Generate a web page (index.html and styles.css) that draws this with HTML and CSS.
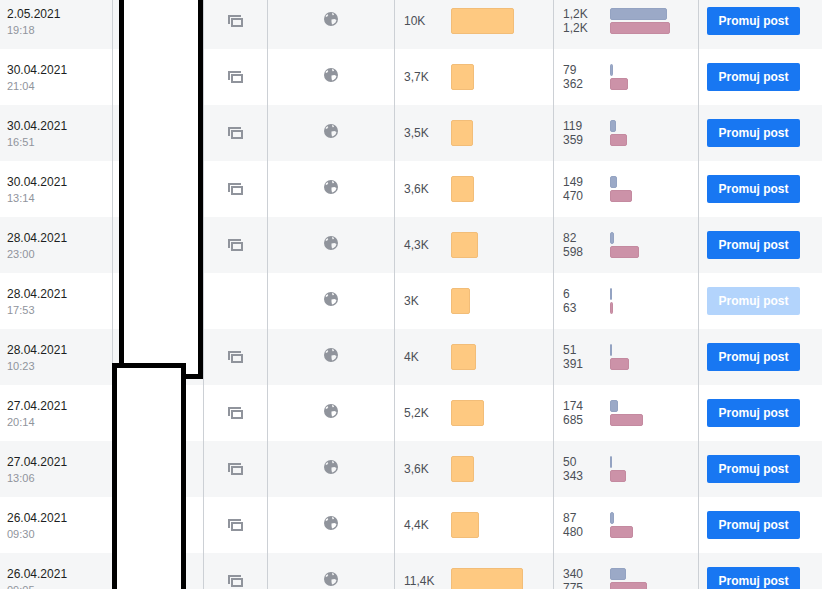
FILE: index.html
```html
<!DOCTYPE html>
<html lang="en">
<head>
    <meta charset="UTF-8">
    <title>Posty</title>
    <link rel="stylesheet" href="styles.css">
</head>
<body>
    <svg class="defs" width="0" height="0">
        <symbol id="copyIcon" viewBox="0 0 15 12">
            <path fill="#90949c" fill-rule="evenodd" d="M0 0h13v2H2v7H0zM3 3h12v9H3zM5 5v5h8V5z"/>
        </symbol>
        <symbol id="globeIcon" viewBox="0 0 14 14">
            <path fill="#90949c" fill-rule="evenodd" d="M7 0a7 7 0 1 0 0 14A7 7 0 0 0 7 0zM7.500 7.500l3-.5 2 1-1 2.500-2 1.500-1.500.5-.5-2.500zM1.800 3.500 3.500 2.200l.8.8-1 1.500-1.500.5zM8 1l1.500.5.5 1.500-1.500.3z"/>
        </symbol>
    </svg>

    <div class="table">
        <div class="row">
            <div class="cell dateCell"><span class="date">2.05.2021</span><span class="time">19:18</span></div>
            <div class="cell"></div>
            <div class="cell iconCell"><svg class="copyIcon"><use href="#copyIcon"/></svg></div>
            <div class="cell iconCell"><svg class="globeIcon"><use href="#globeIcon"/></svg></div>
            <div class="cell reachCell"><span class="metric">10K</span><div class="bar" style="width:63px"></div></div>
            <div class="cell clicksCell"><div class="clicksRow"><span class="clickNum">1,2K</span><div class="miniBar blue" style="width:57px"></div></div><div class="clicksRow"><span class="clickNum">1,2K</span><div class="miniBar red" style="width:60px"></div></div></div>
            <div class="cell btnCell"><button class="promoBtn">Promuj post</button></div>
        </div>
        <div class="row">
            <div class="cell dateCell"><span class="date">30.04.2021</span><span class="time">21:04</span></div>
            <div class="cell"></div>
            <div class="cell iconCell"><svg class="copyIcon"><use href="#copyIcon"/></svg></div>
            <div class="cell iconCell"><svg class="globeIcon"><use href="#globeIcon"/></svg></div>
            <div class="cell reachCell"><span class="metric">3,7K</span><div class="bar" style="width:23px"></div></div>
            <div class="cell clicksCell"><div class="clicksRow"><span class="clickNum">79</span><div class="miniBar blue" style="width:3px"></div></div><div class="clicksRow"><span class="clickNum">362</span><div class="miniBar red" style="width:18px"></div></div></div>
            <div class="cell btnCell"><button class="promoBtn">Promuj post</button></div>
        </div>
        <div class="row">
            <div class="cell dateCell"><span class="date">30.04.2021</span><span class="time">16:51</span></div>
            <div class="cell"></div>
            <div class="cell iconCell"><svg class="copyIcon"><use href="#copyIcon"/></svg></div>
            <div class="cell iconCell"><svg class="globeIcon"><use href="#globeIcon"/></svg></div>
            <div class="cell reachCell"><span class="metric">3,5K</span><div class="bar" style="width:22px"></div></div>
            <div class="cell clicksCell"><div class="clicksRow"><span class="clickNum">119</span><div class="miniBar blue" style="width:6px"></div></div><div class="clicksRow"><span class="clickNum">359</span><div class="miniBar red" style="width:17px"></div></div></div>
            <div class="cell btnCell"><button class="promoBtn">Promuj post</button></div>
        </div>
        <div class="row">
            <div class="cell dateCell"><span class="date">30.04.2021</span><span class="time">13:14</span></div>
            <div class="cell"></div>
            <div class="cell iconCell"><svg class="copyIcon"><use href="#copyIcon"/></svg></div>
            <div class="cell iconCell"><svg class="globeIcon"><use href="#globeIcon"/></svg></div>
            <div class="cell reachCell"><span class="metric">3,6K</span><div class="bar" style="width:23px"></div></div>
            <div class="cell clicksCell"><div class="clicksRow"><span class="clickNum">149</span><div class="miniBar blue" style="width:7px"></div></div><div class="clicksRow"><span class="clickNum">470</span><div class="miniBar red" style="width:22px"></div></div></div>
            <div class="cell btnCell"><button class="promoBtn">Promuj post</button></div>
        </div>
        <div class="row">
            <div class="cell dateCell"><span class="date">28.04.2021</span><span class="time">23:00</span></div>
            <div class="cell"></div>
            <div class="cell iconCell"><svg class="copyIcon"><use href="#copyIcon"/></svg></div>
            <div class="cell iconCell"><svg class="globeIcon"><use href="#globeIcon"/></svg></div>
            <div class="cell reachCell"><span class="metric">4,3K</span><div class="bar" style="width:27px"></div></div>
            <div class="cell clicksCell"><div class="clicksRow"><span class="clickNum">82</span><div class="miniBar blue" style="width:4px"></div></div><div class="clicksRow"><span class="clickNum">598</span><div class="miniBar red" style="width:29px"></div></div></div>
            <div class="cell btnCell"><button class="promoBtn">Promuj post</button></div>
        </div>
        <div class="row">
            <div class="cell dateCell"><span class="date">28.04.2021</span><span class="time">17:53</span></div>
            <div class="cell"></div>
            <div class="cell iconCell"></div>
            <div class="cell iconCell"><svg class="globeIcon"><use href="#globeIcon"/></svg></div>
            <div class="cell reachCell"><span class="metric">3K</span><div class="bar" style="width:19px"></div></div>
            <div class="cell clicksCell"><div class="clicksRow"><span class="clickNum">6</span><div class="miniBar blue" style="width:1px"></div></div><div class="clicksRow"><span class="clickNum">63</span><div class="miniBar red" style="width:3px"></div></div></div>
            <div class="cell btnCell"><button class="promoBtn disabled">Promuj post</button></div>
        </div>
        <div class="row">
            <div class="cell dateCell"><span class="date">28.04.2021</span><span class="time">10:23</span></div>
            <div class="cell"></div>
            <div class="cell iconCell"><svg class="copyIcon"><use href="#copyIcon"/></svg></div>
            <div class="cell iconCell"><svg class="globeIcon"><use href="#globeIcon"/></svg></div>
            <div class="cell reachCell"><span class="metric">4K</span><div class="bar" style="width:25px"></div></div>
            <div class="cell clicksCell"><div class="clicksRow"><span class="clickNum">51</span><div class="miniBar blue" style="width:2px"></div></div><div class="clicksRow"><span class="clickNum">391</span><div class="miniBar red" style="width:19px"></div></div></div>
            <div class="cell btnCell"><button class="promoBtn">Promuj post</button></div>
        </div>
        <div class="row">
            <div class="cell dateCell"><span class="date">27.04.2021</span><span class="time">20:14</span></div>
            <div class="cell"></div>
            <div class="cell iconCell"><svg class="copyIcon"><use href="#copyIcon"/></svg></div>
            <div class="cell iconCell"><svg class="globeIcon"><use href="#globeIcon"/></svg></div>
            <div class="cell reachCell"><span class="metric">5,2K</span><div class="bar" style="width:33px"></div></div>
            <div class="cell clicksCell"><div class="clicksRow"><span class="clickNum">174</span><div class="miniBar blue" style="width:8px"></div></div><div class="clicksRow"><span class="clickNum">685</span><div class="miniBar red" style="width:33px"></div></div></div>
            <div class="cell btnCell"><button class="promoBtn">Promuj post</button></div>
        </div>
        <div class="row">
            <div class="cell dateCell"><span class="date">27.04.2021</span><span class="time">13:06</span></div>
            <div class="cell"></div>
            <div class="cell iconCell"><svg class="copyIcon"><use href="#copyIcon"/></svg></div>
            <div class="cell iconCell"><svg class="globeIcon"><use href="#globeIcon"/></svg></div>
            <div class="cell reachCell"><span class="metric">3,6K</span><div class="bar" style="width:23px"></div></div>
            <div class="cell clicksCell"><div class="clicksRow"><span class="clickNum">50</span><div class="miniBar blue" style="width:2px"></div></div><div class="clicksRow"><span class="clickNum">343</span><div class="miniBar red" style="width:16px"></div></div></div>
            <div class="cell btnCell"><button class="promoBtn">Promuj post</button></div>
        </div>
        <div class="row">
            <div class="cell dateCell"><span class="date">26.04.2021</span><span class="time">09:30</span></div>
            <div class="cell"></div>
            <div class="cell iconCell"><svg class="copyIcon"><use href="#copyIcon"/></svg></div>
            <div class="cell iconCell"><svg class="globeIcon"><use href="#globeIcon"/></svg></div>
            <div class="cell reachCell"><span class="metric">4,4K</span><div class="bar" style="width:28px"></div></div>
            <div class="cell clicksCell"><div class="clicksRow"><span class="clickNum">87</span><div class="miniBar blue" style="width:4px"></div></div><div class="clicksRow"><span class="clickNum">480</span><div class="miniBar red" style="width:23px"></div></div></div>
            <div class="cell btnCell"><button class="promoBtn">Promuj post</button></div>
        </div>
        <div class="row">
            <div class="cell dateCell"><span class="date">26.04.2021</span><span class="time">09:05</span></div>
            <div class="cell"></div>
            <div class="cell iconCell"><svg class="copyIcon"><use href="#copyIcon"/></svg></div>
            <div class="cell iconCell"><svg class="globeIcon"><use href="#globeIcon"/></svg></div>
            <div class="cell reachCell"><span class="metric">11,4K</span><div class="bar" style="width:72px"></div></div>
            <div class="cell clicksCell"><div class="clicksRow"><span class="clickNum">340</span><div class="miniBar blue" style="width:16px"></div></div><div class="clicksRow"><span class="clickNum">775</span><div class="miniBar red" style="width:37px"></div></div></div>
            <div class="cell btnCell"><button class="promoBtn">Promuj post</button></div>
        </div>
    </div>

    <div class="redact redactTop"></div>
    <div class="redact redactBottom"></div>
</body>
</html>
```

FILE: styles.css
```css
html, body {
    margin: 0;
    height: 589px;
    overflow: hidden;
}
body {
    position: relative;
    font-family: "Liberation Sans", Arial, sans-serif;
    font-size: 12px;
    background-color: #fff;
}
.defs {
    display: block;
}
.table {
    margin-top: -7px;
}
.row {
    display: grid;
    grid-template-columns: 113px 91px 64px 127px 159px 145px 1fr;
    height: 56px;
    background-color: #fff;
}
.row:nth-child(odd) {
    background-color: #f5f6f7;
}
.cell {
    border-right: 1px solid #ccd0d5;
    box-sizing: border-box;
}
.dateCell {
    display: flex;
    flex-direction: column;
    padding: 13px 0 0 7px;
}
.date {
    color: #1c1e21;
    line-height: 16px;
}
.time {
    color: #90949c;
    font-size: 11px;
    line-height: 14px;
    margin-top: 1px;
}
.iconCell {
    display: flex;
    align-items: center;
    justify-content: center;
}
.copyIcon {
    width: 15px;
    height: 12px;
}
.globeIcon {
    width: 14px;
    height: 14px;
    margin-bottom: 4px;
}
.reachCell {
    display: flex;
    align-items: center;
    padding-left: 9px;
}
.metric {
    width: 47px;
    color: #4b4f56;
}
.bar {
    height: 26px;
    box-sizing: border-box;
    background-color: #fec981;
    border: 1px solid #f2bd78;
    border-radius: 2px;
}
.clicksCell {
    display: flex;
    flex-direction: column;
    justify-content: center;
    gap: 2px;
    padding-left: 9px;
}
.clicksRow {
    display: flex;
    align-items: center;
    height: 12px;
}
.clickNum {
    width: 47px;
    color: #4b4f56;
}
.miniBar {
    height: 12px;
    box-sizing: border-box;
    border-radius: 2px;
}
.blue {
    background-color: #9ba9c7;
    border: 1px solid #94a3c2;
}
.red {
    background-color: #cc92a8;
    border: 1px solid #c48aa0;
}
.btnCell {
    border-right: none;
    display: flex;
    align-items: center;
    padding-left: 8px;
}
.promoBtn {
    width: 93px;
    height: 28px;
    padding: 0;
    background-color: #1877f2;
    color: #fff;
    border: none;
    border-radius: 2px;
    font-family: "Liberation Sans", Arial, sans-serif;
    font-size: 12px;
    font-weight: bold;
    cursor: pointer;
}
.promoBtn.disabled {
    background-color: #b3d4fc;
    cursor: default;
}
.redact {
    position: absolute;
    box-sizing: border-box;
    background-color: #fff;
    border: 5px solid #000;
}
.redactTop {
    left: 119px;
    top: -10px;
    width: 84px;
    height: 389px;
}
.redactBottom {
    left: 112px;
    top: 363px;
    width: 74px;
    height: 240px;
}
```
